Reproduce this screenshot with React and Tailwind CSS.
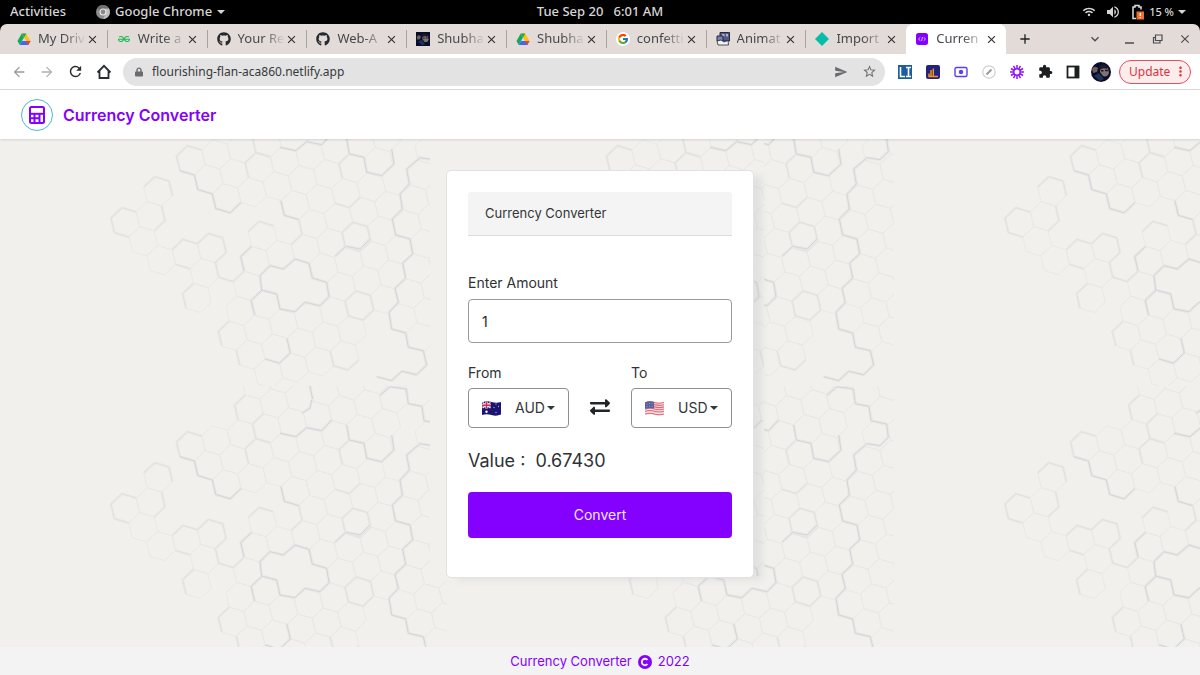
import React, { useState } from "react";
import { FaGithub, FaExchangeAlt, FaWifi, FaLock } from "react-icons/fa";
import { FcGoogle } from "react-icons/fc";
import { SiGeeksforgeeks } from "react-icons/si";
import { MdSend, MdStarBorder, MdExtension, MdRefresh, MdArrowBack, MdArrowForward, MdClose, MdAdd, MdMoreVert, MdVolumeUp, MdExpandMore } from "react-icons/md";

/* ---------- honeycomb backdrop ---------- */

const ORIGIN = [136, 280];
const A = [76, -18.1];
const B = [53.7, 56.7];
const VERTS = [[43, 13], [10.4, 43.8], [-32.7, 31], [-43, -13], [-10.4, -43.8], [32.7, -31]];

// row -> list of [first, last] column ranges
const ROWS = [
  [-4, [[8, 15]]],
  [-3, [[7, 14]]],
  [-2, [[4, 14]]],
  [-1, [[2, 2], [4, 11], [13, 15]]],
  [0, [[0, 1], [4, 10], [12, 13]]],
  [1, [[0, 0], [6, 9], [11, 12]]],
  [2, [[0, 2], [4, 4], [6, 11]]],
  [3, [[1, 1], [3, 11]]],
  [4, [[0, 0], [2, 2], [5, 10]]],
  [5, [[1, 2], [5, 9]]],
  [6, [[0, 9]]],
  [7, [[0, 4], [7, 8]]],
  [8, [[0, 3], [6, 7]]],
];

const center = (n, m) => [ORIGIN[0] + n * A[0] + m * B[0], ORIGIN[1] + n * A[1] + m * B[1]];

const hexPath = (n, m) => {
  const [x, y] = center(n, m);
  return "M" + VERTS.map(([dx, dy]) => (x + dx).toFixed(1) + " " + (y + dy).toFixed(1)).join("L") + "Z";
};

const edgePath = ([n, m, start, count]) => {
  const [x, y] = center(n, m);
  const pts = [];
  for (let i = 0; i <= count; i++) {
    const [dx, dy] = VERTS[(start + i) % 6];
    pts.push((x + dx).toFixed(1) + " " + (y + dy).toFixed(1));
  }
  return "M" + pts.join("L");
};

const FAINT = ROWS.map(([m, ranges]) =>
  ranges.map(([from, to]) => Array.from({ length: to - from + 1 }, (_, i) => hexPath(from + i, m)).join("")).join("")
).join("");

const MEDIUM = [
  [2, -1, 3, 3], [0, 0, 1, 4], [1, 0, 5, 2], [1, 2, 3, 2], [1, 2, 1, 1], [2, 2, 3, 4],
  [4, -2, 2, 3], [0, 6, 2, 2], [0, 7, 2, 1], [2, 3, 0, 3], [5, 2, 5, 2], [4, 2, 3, 2],
  [0, 4, 2, 2], [2, 5, 2, 3], [5, 6, 0, 6], [7, 3, 0, 6], [8, 1, 0, 2], [3, 8, 0, 3], [6, -1, 2, 3],
  [7, -2, 2, 2], [9, 0, 2, 2], [5, 4, 2, 1], [7, -3, 2, 2],
].map(edgePath).join("");

const STRONG =
  [[4, -2, 1, 1], [4, -1, 1, 2], [4, 0, 0, 3], [6, 1, 1, 2], [3, 3, 2, 2], [1, 7, 5, 3], [2, 5, 2, 2]].map(edgePath).join("") +
  "M540 440L570 410L610 420L645 390L687 403L697 447L740 460L747 503L720 530L675 520L645 548L600 540L590 495L545 483Z" +
  "M765 382L797 352L840 360L870 330" +
  "M800 30L808 75L852 85L860 130L905 140L942 105L935 60" +
  "M600 55L648 65L680 38L725 47L755 15" +
  "M900 -59L930 -85L979 -78L985 -34L1026 -26L1032 17L1079 27L1084 67L1059 92L1020 86L980 120L988 165L960 195L967 240L937 270L947 318L990 330L998 375L968 402L977 447L945 478L955 520L927 550L935 600L977 612L985 655L1030 665L1040 708L1010 737L965 727L935 755L890 743" +
  "M698 -48L690 -86M695 -46L690 -20L665 -5";

function Honeycomb() {
  return (
    <svg className="absolute inset-0 h-full w-full" aria-hidden="true">
      <defs>
        <pattern id="comb" width="447" height="286" patternUnits="userSpaceOnUse" patternTransform="translate(0 -39)">
          <g transform="translate(80 29) scale(0.33333)" fill="none" strokeLinejoin="round">
            <path d={FAINT} stroke="#e8e8e8" strokeWidth="3" />
            <path d={MEDIUM} stroke="#e9e9e8" strokeWidth="8" />
            <path d={MEDIUM} stroke="#dedee0" strokeWidth="2.5" />
            <path d={STRONG} stroke="#e8e8e8" strokeWidth="9" />
            <path d={STRONG} stroke="#d0d0d3" strokeWidth="2.5" />
          </g>
        </pattern>
        <pattern id="comb-shifted" href="#comb" patternTransform="translate(-17 -39)" />
      </defs>
      <rect width="100%" height="100%" fill="url(#comb)" />
      <rect x="430" width="334" height="437" fill="#f1f0ec" />
      <rect x="430" width="334" height="437" fill="url(#comb-shifted)" />
    </svg>
  );
}

/* ---------- small drawings ---------- */

const Drive = () => (
  <svg viewBox="0 0 28 26" className="h-[13px] w-[14px]">
    <path d="M9.5 1 L1 16 L5.5 24 L14 9 Z" fill="#12a95c" />
    <path d="M9.5 1 H18.5 L27 16 H18 Z" fill="#fbc116" />
    <path d="M9.5 1 H18.5 L14 9 Z" fill="#12a95c" />
    <path d="M10 16 H27 L22.5 24 H5.5 Z" fill="#4a63f0" />
    <path d="M18 16 H27 L22.5 24 Z" fill="#ea4335" />
  </svg>
);

const Chrome = () => (
  <svg viewBox="0 0 14 14" className="h-[14px] w-[14px]">
    <circle cx="7" cy="7" r="7" fill="#8d8d8d" />
    <path d="M7 7 L1 3.4 A7 7 0 0 1 13 3.6 L7 3.8Z" fill="#6f6f6f" />
    <path d="M13 3.6 A7 7 0 0 1 7 14 L10 8.5 L9.5 3.7Z" fill="#bdbdbd" />
    <circle cx="7" cy="7" r="3.5" fill="#e9e9e9" />
    <circle cx="7" cy="7" r="2.4" fill="#8a8a8a" />
  </svg>
);

const Photo = ({ className }) => (
  <svg viewBox="0 0 20 20" className={className}>
    <rect width="20" height="20" fill="#0b0b2b" />
    <path d="M9 5 Q14 2 17 6 L18 11 Q16 16 12 14 L9 10Z" fill="#84726f" />
    <path d="M8 4 Q13 0 17 5 L16 7 Q12 5 9 8Z" fill="#1a1a2a" />
    <path d="M10 8.800 H12.500 M14 8.500 H17" stroke="#151525" strokeWidth="1.400" />
    <path d="M1 7 Q3 3 7 6 L6 10 L2 11Z" fill="#6b615f" />
    <path d="M3 14 L8 11 L13 17 L9 19Z" fill="#1d3555" />
  </svg>
);

const Toy = () => (
  <svg viewBox="0 0 14 14" className="h-[14px] w-[14px]">
    <path d="M4 0.500 H13.500 V9 H4Z" fill="#55597e" stroke="#26283c" />
    <path d="M6 2 H8.500 V4.500 H6Z M10 2 H12 V4.500 H10Z" fill="#a9b0e0" />
    <path d="M1 4 H7 V9 H1Z" fill="#7a80b5" stroke="#26283c" />
    <path d="M1 9 L5 8 L8 10 L12 8.500 L12.500 13 H2Z" fill="#f3f3f3" stroke="#26283c" strokeWidth="0.8" />
  </svg>
);

const Diamond = () => (
  <svg viewBox="0 0 14 14" className="h-[14px] w-[14px]"><path d="M7 0 L14 7 L7 14 L0 7Z" fill="#05bda8" /></svg>
);

const CodeBadge = () => (
  <svg viewBox="0 0 12 12" className="h-3 w-3">
    <rect width="12" height="12" rx="2.500" fill="#8400ff" />
    <path d="M4.300 4.300 L2.500 6 L4.300 7.700 M7.700 4.300 L9.500 6 L7.700 7.700 M6.500 4 L5.500 8" fill="none" stroke="#e3c8ff" strokeWidth="0.9" />
  </svg>
);

const Home = () => (
  <svg viewBox="0 0 16 16" className="h-4 w-4">
    <path d="M1.500 8.500 L8 1.800 L14.500 8.500 M3.500 7 V14 H12.500 V7" fill="none" stroke="currentColor" strokeWidth="1.800" />
  </svg>
);

const Burst = () => (
  <svg viewBox="0 0 16 16" className="h-4 w-4">
    <g stroke="#9013fe" strokeWidth="1.500">
      {[0, 30, 60, 90, 120, 150, 180, 210, 240, 270, 300, 330].map((deg) => (
        <path key={deg} d="M8 5 V1" transform={`rotate(${deg} 8 8)`} />
      ))}
    </g>
    <circle cx="8" cy="8" r="3.200" fill="none" stroke="#9013fe" strokeWidth="1.400" />
  </svg>
);

const EXTENSIONS = [
  ["Library", <svg key="a" viewBox="0 0 14 14" className="h-[14px] w-[14px]"><rect width="14" height="14" fill="#1d5c9e" /><path d="M2.500 2 V11.500 H7 M8 2.500 H13 M10.500 2.500 V11.500 M8 11.500 H13" fill="none" stroke="#fff" strokeWidth="1.600" /></svg>],
  ["Statistics", <svg key="b" viewBox="0 0 14 14" className="h-[14px] w-[14px]"><rect width="14" height="14" rx="2" fill="#23237c" /><path d="M3 12 V8.500 M5 12 V5 M7.300 12 V3.500 M2.500 11.500 H12" stroke="#f0941f" strokeWidth="1.500" /></svg>],
  ["Recorder", <svg key="c" viewBox="0 0 14 12" className="h-3 w-[14px]"><rect x="1" y="1.500" width="12" height="9" rx="1.500" fill="#fff" stroke="#5a3ff0" strokeWidth="1.400" /><circle cx="7" cy="6" r="2.200" fill="#5a3ff0" /></svg>],
  ["Picker", <svg key="d" viewBox="0 0 14 14" className="h-[14px] w-[14px]"><circle cx="7" cy="7" r="6.200" fill="#fff" stroke="#cfcfcf" strokeWidth="1.200" /><path d="M4.500 9.500 L9.500 4.500" stroke="#9a9a9a" strokeWidth="2" /></svg>],
  ["Loom", <Burst key="e" />],
  ["Extensions", <MdExtension key="f" className="h-[15px] w-[15px] text-[#1d1e20]" />],
  ["Side panel", <svg key="g" viewBox="0 0 14 14" className="h-[14px] w-[14px]"><rect x="1.500" y="1.500" width="11" height="11" fill="#fff" stroke="#1d1e20" strokeWidth="1.800" /><path d="M8.500 1 H13 V13 H8.500Z" fill="#1d1e20" /></svg>],
];

const AustraliaFlag = () => (
  <svg viewBox="0 0 38 30" className="h-[15px] w-[19px] shrink-0">
    <path d="M0 3 Q9 -1 19 2 T38 2 V27 Q29 31 19 28 T0 28Z" fill="#1a1570" />
    <path d="M1 3 L17 14 M17 3 L1 14" stroke="#f0e8f2" strokeWidth="3" />
    <path d="M9 1 V15 M0 8.500 H18" stroke="#f0e8f2" strokeWidth="5" />
    <path d="M9 1 V15 M0 8.500 H18" stroke="#dc2a4e" strokeWidth="2.600" />
    <circle cx="9" cy="21.500" r="2.400" fill="#fff" />
    <g fill="#a9a3d4"><circle cx="28" cy="6" r="1.300" /><circle cx="24" cy="13" r="1.300" /><circle cx="33" cy="11" r="1.300" /><circle cx="28" cy="23" r="1.400" /></g>
  </svg>
);

const UsaFlag = () => (
  <svg viewBox="0 0 38 30" className="h-[15px] w-[19px] shrink-0">
    <path d="M0 3 Q9 -1 19 2 T38 2 V27 Q29 31 19 28 T0 28Z" fill="#f6dfe2" />
    <g fill="none" stroke="#df6677" strokeWidth="2.200">
      <path d="M0 3.500 Q9 0 19 3 T38 3" /><path d="M0 7.800 Q9 4.300 19 7.300 T38 7.300" /><path d="M0 12.200 Q9 8.700 19 11.700 T38 11.700" />
      <path d="M0 16.600 Q9 13 19 16 T38 16" /><path d="M0 21 Q9 17.500 19 20.500 T38 20.500" /><path d="M0 26 Q9 23 19 26 T38 26" />
    </g>
    <path d="M0 3 Q9 -1 18 2 V15 Q9 13 0 16Z" fill="#5a5fa0" />
    <g fill="#a9acd2"><circle cx="4" cy="6" r="1" /><circle cx="9" cy="5" r="1" /><circle cx="14" cy="5.500" r="1" /><circle cx="4" cy="11" r="1" /><circle cx="9" cy="10" r="1" /><circle cx="14" cy="10.500" r="1" /></g>
  </svg>
);

const Calculator = () => (
  <svg viewBox="0 0 16 18" className="h-[18px] w-4">
    <rect x="1" y="1" width="14" height="16" rx="1.500" fill="none" stroke="#8400ff" strokeWidth="2" />
    <path d="M1 6.800 H15 V8.800 H1Z" fill="#8400ff" />
    <path d="M1 12.300 H10.500 M5.500 8 V17 M10.500 8 V17" stroke="#8400ff" strokeWidth="2" />
  </svg>
);

const Caret = ({ className }) => (
  <svg viewBox="0 0 8 4" className={className}><path d="M0 0 H8 L4 4Z" fill="currentColor" /></svg>
);

const Battery = () => (
  <svg viewBox="0 0 14 16" className="h-4 w-[14px]">
    <path d="M5 14.500 H2 V3 H4 V1.500 H8 V3 H10 V5.500" fill="none" stroke="#dedede" strokeWidth="1.500" />
    <path d="M5.500 7.500 H13 V15.500 H5.500Z" fill="#f0702c" />
    <path d="M9.300 9 V12 M9.300 13 V14.300" stroke="#fff" strokeWidth="1.300" />
  </svg>
);

/* ---------- browser frame ---------- */

const TABS = [
  ["My Driv", <Drive key="0" />],
  ["Write a", <SiGeeksforgeeks key="1" className="h-3 w-[14px] text-[#1db954]" />],
  ["Your Re", <FaGithub key="2" className="h-[14px] w-[14px] text-[#24292f]" />],
  ["Web-A", <FaGithub key="3" className="h-[14px] w-[14px] text-[#24292f]" />],
  ["Shubha", <Photo key="4" className="h-[14px] w-[14px]" />],
  ["Shubha", <Drive key="5" />],
  ["confetti", <span key="6" className="rounded-full bg-white p-px"><FcGoogle className="h-3 w-3" /></span>],
  ["Animat", <Toy key="7" />],
  ["Import", <Diamond key="8" />],
  ["Curren", <CodeBadge key="9" />],
];

function SystemBar() {
  return (
    <div className="grid h-6 shrink-0 grid-cols-3 items-center bg-black text-[13px] font-medium text-[#d6d6d6]">
      <div className="flex items-center gap-[30px] pl-[10px]">
        <button>Activities</button>
        <button className="flex items-center gap-[5px]">
          <Chrome />
          Google Chrome
          <Caret className="h-1 w-2" />
        </button>
      </div>
      <button className="justify-self-center whitespace-pre">Tue Sep 20   6:01 AM</button>
      <div className="flex items-center justify-end gap-[10px] pr-[14px]">
        <FaWifi className="h-3 w-3" />
        <MdVolumeUp className="h-4 w-4" />
        <div className="flex items-center gap-1 text-[11px]">
          <Battery />
          15 %
          <Caret className="h-1 w-2" />
        </div>
      </div>
    </div>
  );
}

function Tab({ title, icon, active, last }) {
  return (
    <div className={`flex min-w-0 items-center pl-[9px] pr-2 ${active ? "rounded-t-[7px] bg-white" : ""} ${last || active ? "" : "border-r border-[#a9a3a0]"} ${active ? "h-[30px]" : "h-[18px]"}`}>
      <span className="flex w-[14px] shrink-0 justify-center">{icon}</span>
      <button className="ml-[7px] min-w-0 flex-1 whitespace-nowrap text-left text-[13px] text-[#45484c] [mask-image:linear-gradient(to_right,black_55%,transparent)]">
        {title}
      </button>
      <button aria-label={`Close ${title}`} className="shrink-0 text-[#2b2d30]">
        <MdClose className="h-[13px] w-[13px]" />
      </button>
    </div>
  );
}

function TabStrip() {
  return (
    <div className="bg-black">
      <div className="flex h-[30px] items-center rounded-t-[7px] bg-[#e3dbd8] pl-2">
        <div className="grid w-[998px] grid-cols-10 items-center">
          {TABS.map(([title, icon], i) => (
            <Tab key={i} title={title} icon={icon} active={i === 9} last={i === 8} />
          ))}
        </div>
        <button aria-label="New tab" className="ml-[11px] text-[#202124]"><MdAdd className="h-4 w-4" /></button>
        <div className="ml-auto flex items-center gap-[14px] pr-2 text-[#4a4d50]">
          <button aria-label="Search tabs" className="mr-[5px]"><MdExpandMore className="h-4 w-4" /></button>
          <button aria-label="Minimize"><svg viewBox="0 0 14 14" className="h-[14px] w-[14px]"><path d="M3 11 H12" stroke="currentColor" strokeWidth="1.500" /></svg></button>
          <button aria-label="Restore"><svg viewBox="0 0 14 14" className="h-[14px] w-[14px]"><path d="M5.500 3 H12 V8.500 H5.500Z M5.500 5.500 H3.500 V11 H10 V8.500" fill="none" stroke="currentColor" strokeWidth="1.200" /></svg></button>
          <button aria-label="Close window"><MdClose className="h-[14px] w-[14px]" /></button>
        </div>
      </div>
    </div>
  );
}

function Toolbar() {
  return (
    <div className="flex h-9 shrink-0 items-center border-b border-[#dadada] bg-white pl-[11px] pr-[9px]">
      <div className="flex items-center gap-3 text-[#2b2d30]">
        <button aria-label="Back" className="text-[#9b9b9b]"><MdArrowBack className="h-4 w-4" /></button>
        <button aria-label="Forward" className="text-[#b0b0b0]"><MdArrowForward className="h-4 w-4" /></button>
        <button aria-label="Reload"><MdRefresh className="h-[17px] w-[17px]" /></button>
        <button aria-label="Home"><Home /></button>
      </div>
      <div className="ml-[11px] flex h-7 flex-1 items-center rounded-full bg-[#e3e3e3] pl-3 pr-2 text-[#6a6c6f]">
        <FaLock className="h-[10px] w-2" />
        <input aria-label="Address" defaultValue="flourishing-flan-aca860.netlify.app" className="ml-[9px] min-w-0 flex-1 bg-transparent text-xs text-[#37393c] outline-none" />
        <button aria-label="Share"><MdSend className="h-[14px] w-[14px]" /></button>
        <button aria-label="Bookmark" className="ml-[14px]"><MdStarBorder className="h-[15px] w-[15px]" /></button>
      </div>
      <div className="ml-3 flex items-center gap-3">
        {EXTENSIONS.map(([name, icon]) => (
          <button key={name} aria-label={name} className="flex w-4 justify-center">{icon}</button>
        ))}
        <button aria-label="Profile" className="-mx-[2px]"><Photo className="h-5 w-5 rounded-full" /></button>
      </div>
      <button className="ml-[10px] flex h-6 w-[72px] items-center justify-between rounded-full border border-[#e0505a] bg-[#fcecec] pl-[9px] pr-[2px] text-xs text-[#d93541]">
        Update
        <MdMoreVert className="h-[15px] w-[15px]" />
      </button>
    </div>
  );
}

/* ---------- page ---------- */

function CurrencyField({ id, label, value, onChange, flag }) {
  return (
    <div>
      <label htmlFor={id} className="block text-sm leading-5 text-[#2f3235]">{label}</label>
      <div className="mt-[5px] flex h-10 w-[101px] items-center rounded border border-[#8f8f8f] bg-white pl-[13px] text-[#333638]">
        {flag}
        <select id={id} value={value} onChange={onChange} className="ml-[14px] w-8 appearance-none bg-transparent text-sm outline-none">
          <option>AUD</option>
          <option>USD</option>
        </select>
        <Caret className="pointer-events-none h-1 w-2" />
      </div>
    </div>
  );
}

export default function App() {
  const [amount, setAmount] = useState("1");
  const [from, setFrom] = useState("AUD");
  const [to, setTo] = useState("USD");
  const flagOf = (code) => (code === "AUD" ? <AustraliaFlag /> : <UsaFlag />);
  const swap = () => { setFrom(to); setTo(from); };

  return (
    <div className="flex min-h-screen flex-col font-['Noto_Sans',sans-serif]">
      <SystemBar />
      <TabStrip />
      <Toolbar />
      <div className="flex flex-1 flex-col font-['Inter',sans-serif]">
        <header className="relative z-10 flex h-[49px] items-center gap-[10px] bg-white pl-[21px] shadow-[0_1px_2px_rgba(0,0,0,0.12)]">
          <span className="flex h-8 w-8 items-center justify-center rounded-full border border-[#4db8d0]"><Calculator /></span>
          <a href="#home" className="text-base font-semibold text-[#8400ff]">Currency Converter</a>
        </header>
        <main className="relative flex flex-1 justify-center bg-[#f1f0ec] pb-[69px] pt-[31px]">
          <Honeycomb />
          <section className="relative w-[308px] rounded-[5px] border border-[#e2e2e2] bg-white px-[21px] pb-[39px] pt-[21px] shadow-[10px_4px_6px_-2px_rgba(190,192,200,0.3)]">
            <h1 className="flex h-11 items-center rounded-t-[3px] border-b border-[#dcdcdc] bg-[#f4f4f4] pl-[17px] text-[13px] text-[#333638]">Currency Converter</h1>
            <label htmlFor="amount" className="mt-[37px] block text-sm leading-5 text-[#2f3235]">Enter Amount</label>
            <input id="amount" value={amount} onChange={(e) => setAmount(e.target.value)} className="mt-[6px] block h-11 w-full rounded border border-[#9a9a9a] px-[13px] text-sm text-[#212529] outline-none" />
            <div className="mt-5 flex items-end justify-between">
              <CurrencyField id="from" label="From" value={from} onChange={(e) => setFrom(e.target.value)} flag={flagOf(from)} />
              <button aria-label="Swap currencies" onClick={swap} className="mb-[11px] text-[#212529]"><FaExchangeAlt className="h-5 w-5" /></button>
              <CurrencyField id="to" label="To" value={to} onChange={(e) => setTo(e.target.value)} flag={flagOf(to)} />
            </div>
            <p className="mt-[21px] whitespace-pre text-lg leading-6 text-[#2f3235]">Value :  0.67430</p>
            <button className="mt-[19px] h-[46px] w-full rounded bg-[#8400ff] text-sm text-[#f3e8ff]">Convert</button>
          </section>
        </main>
        <footer className="flex h-[29px] items-center justify-center gap-[6px] bg-[#f3f3f3] text-[13px] text-[#8400ff]">
          <span>Currency Converter</span>
          <svg viewBox="0 0 14 14" className="h-[14px] w-[14px]"><circle cx="7" cy="7" r="7" fill="#8400ff" /><path d="M9.500 5 A3.200 3.200 0 1 0 9.500 9" fill="none" stroke="#f3f3f3" strokeWidth="1.900" /></svg>
          <span>2022</span>
        </footer>
      </div>
    </div>
  );
}
